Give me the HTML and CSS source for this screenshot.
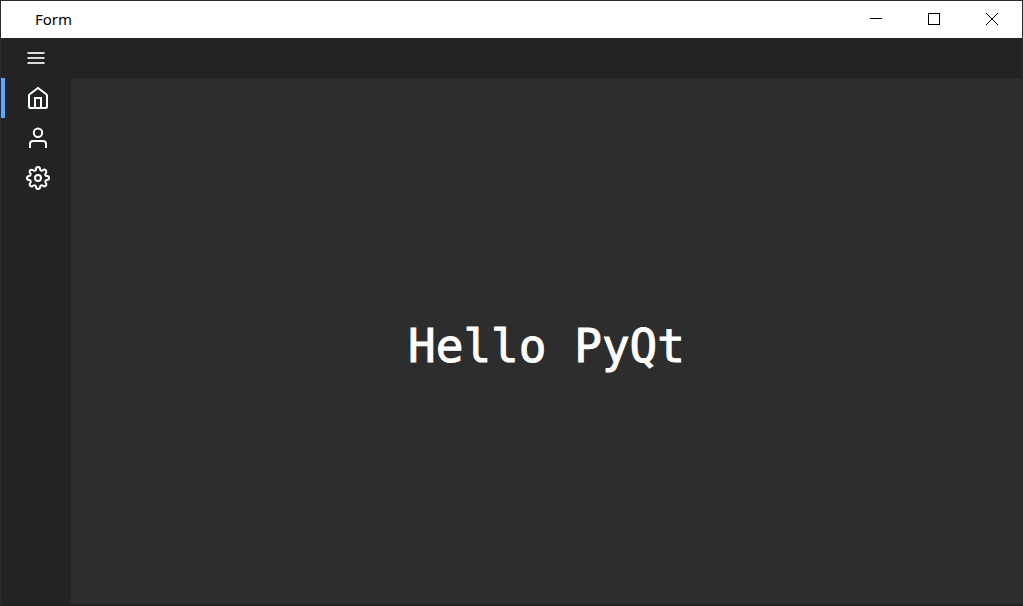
FILE: index.html
```html
<!DOCTYPE html>
<html lang="en">
<head>
<meta charset="utf-8">
<title>Form</title>
<link rel="stylesheet" href="styles.css">
</head>
<body>
<div class="window">
  <header class="titlebar">
    <h1 class="title">Form</h1>
    <div class="controls">
      <button class="control" type="button" aria-label="Minimize"><svg width="12" height="12" viewBox="0 0 12 12" shape-rendering="crispEdges"><path d="M0 5.5h12"/></svg></button>
      <button class="control" type="button" aria-label="Maximize"><svg width="12" height="12" viewBox="0 0 12 12" shape-rendering="crispEdges"><path d="M.5.5h11v11H.5z"/></svg></button>
      <button class="control" type="button" aria-label="Close"><svg width="12" height="12" viewBox="0 0 12 12"><path d="M0 0l12 12M12 0L0 12"/></svg></button>
    </div>
  </header>
  <div class="toolbar">
    <button class="menu" type="button" aria-label="Toggle menu"><svg width="18" height="12" viewBox="0 0 18 12"><path d="M.5 1h17M.5 6h17M.5 11h17"/></svg></button>
  </div>
  <div class="body">
    <nav class="sidebar">
      <button class="item active" type="button" aria-label="Home"><svg width="24" height="24" viewBox="0 0 24 24"><path d="M3 9.5q0-.8.7-1.3L12 2l8.300 6.200q.7.5.7 1.300V20.500a1.500 1.500 0 0 1-1.500 1.500h-15A1.500 1.500 0 0 1 3 20.500z"/><path d="M9 22V12h6v10"/></svg></button>
      <button class="item" type="button" aria-label="User"><svg width="24" height="24" viewBox="0 0 24 24"><path d="M20 22v-4a3 3 0 0 0-3-3H7a3 3 0 0 0-3 3v4"/><circle cx="12" cy="6.800" r="4.200"/></svg></button>
      <button class="item" type="button" aria-label="Settings"><svg width="24" height="24" viewBox="0 0 24 24"><circle cx="12" cy="12" r="3"/><path d="M19.400 15a1.650 1.650 0 0 0 .33 1.820l.06.06a2 2 0 0 1 0 2.830 2 2 0 0 1-2.830 0l-.06-.06a1.650 1.650 0 0 0-1.820-.33 1.650 1.650 0 0 0-1 1.510V21a2 2 0 0 1-2 2 2 2 0 0 1-2-2v-.09A1.650 1.650 0 0 0 9 19.400a1.650 1.650 0 0 0-1.820.33l-.06.06a2 2 0 0 1-2.830 0 2 2 0 0 1 0-2.830l.06-.06a1.650 1.650 0 0 0 .33-1.820 1.650 1.650 0 0 0-1.510-1H3a2 2 0 0 1-2-2 2 2 0 0 1 2-2h.09A1.650 1.650 0 0 0 4.600 9a1.650 1.650 0 0 0-.33-1.820l-.06-.06a2 2 0 0 1 0-2.830 2 2 0 0 1 2.830 0l.06.06a1.650 1.650 0 0 0 1.820.33H9a1.650 1.650 0 0 0 1-1.510V3a2 2 0 0 1 2-2 2 2 0 0 1 2 2v.09a1.650 1.650 0 0 0 1 1.510 1.650 1.650 0 0 0 1.820-.33l.06-.06a2 2 0 0 1 2.830 0 2 2 0 0 1 0 2.830l-.06.06a1.650 1.650 0 0 0-.33 1.820V9a1.650 1.650 0 0 0 1.510 1H21a2 2 0 0 1 2 2 2 2 0 0 1-2 2h-.09a1.650 1.650 0 0 0-1.510 1z"/></svg></button>
    </nav>
    <main class="content"><p class="greeting">Hello PyQt</p></main>
  </div>
</div>
</body>
</html>
```
FILE: styles.css
```css
* {
  box-sizing: border-box;
}

body {
  margin: 0;
  font-family: "Noto Sans", "Open Sans", sans-serif;
}

button {
  border: 0;
  padding: 0;
  background: transparent;
  display: flex;
  align-items: center;
}

svg {
  display: block;
  fill: none;
  stroke: currentColor;
}

.window {
  display: flex;
  flex-direction: column;
  min-height: 100vh;
  border: 1px solid #2a2b30;
  border-bottom: 2px solid #211e22;
  background: #232323;
}

.titlebar {
  display: flex;
  justify-content: space-between;
  height: 37px;
  padding-left: 34px;
  background: #fff;
  color: #000;
}

.title {
  margin: 0;
  font-size: 15px;
  font-weight: 400;
  line-height: 37px;
}

.controls {
  display: flex;
  padding: 0 1px 2px 0;
}

.control {
  width: 58px;
  justify-content: center;
  color: #000;
}

.toolbar {
  display: flex;
  height: 40px;
}

.menu {
  width: 70px;
  justify-content: center;
  color: #dadada;
  stroke-width: 2px;
}

.body {
  display: flex;
  flex: 1;
}

.sidebar {
  width: 70px;
}

.item {
  width: 100%;
  height: 40px;
  padding-left: 21px;
  border-left: 4px solid transparent;
  color: #fff;
  stroke-width: 2px;
}

.active {
  border-left-color: #55aaff;
}

.content {
  display: flex;
  flex: 1;
  align-items: center;
  justify-content: center;
  padding-top: 10px;
  background: #2d2d2d;
}

.greeting {
  margin: 0;
  color: #fff;
  font-family: "DejaVu Sans Mono", monospace;
  font-size: 46px;
  line-height: 56px;
  -webkit-text-stroke: 1px #fff;
}
```
